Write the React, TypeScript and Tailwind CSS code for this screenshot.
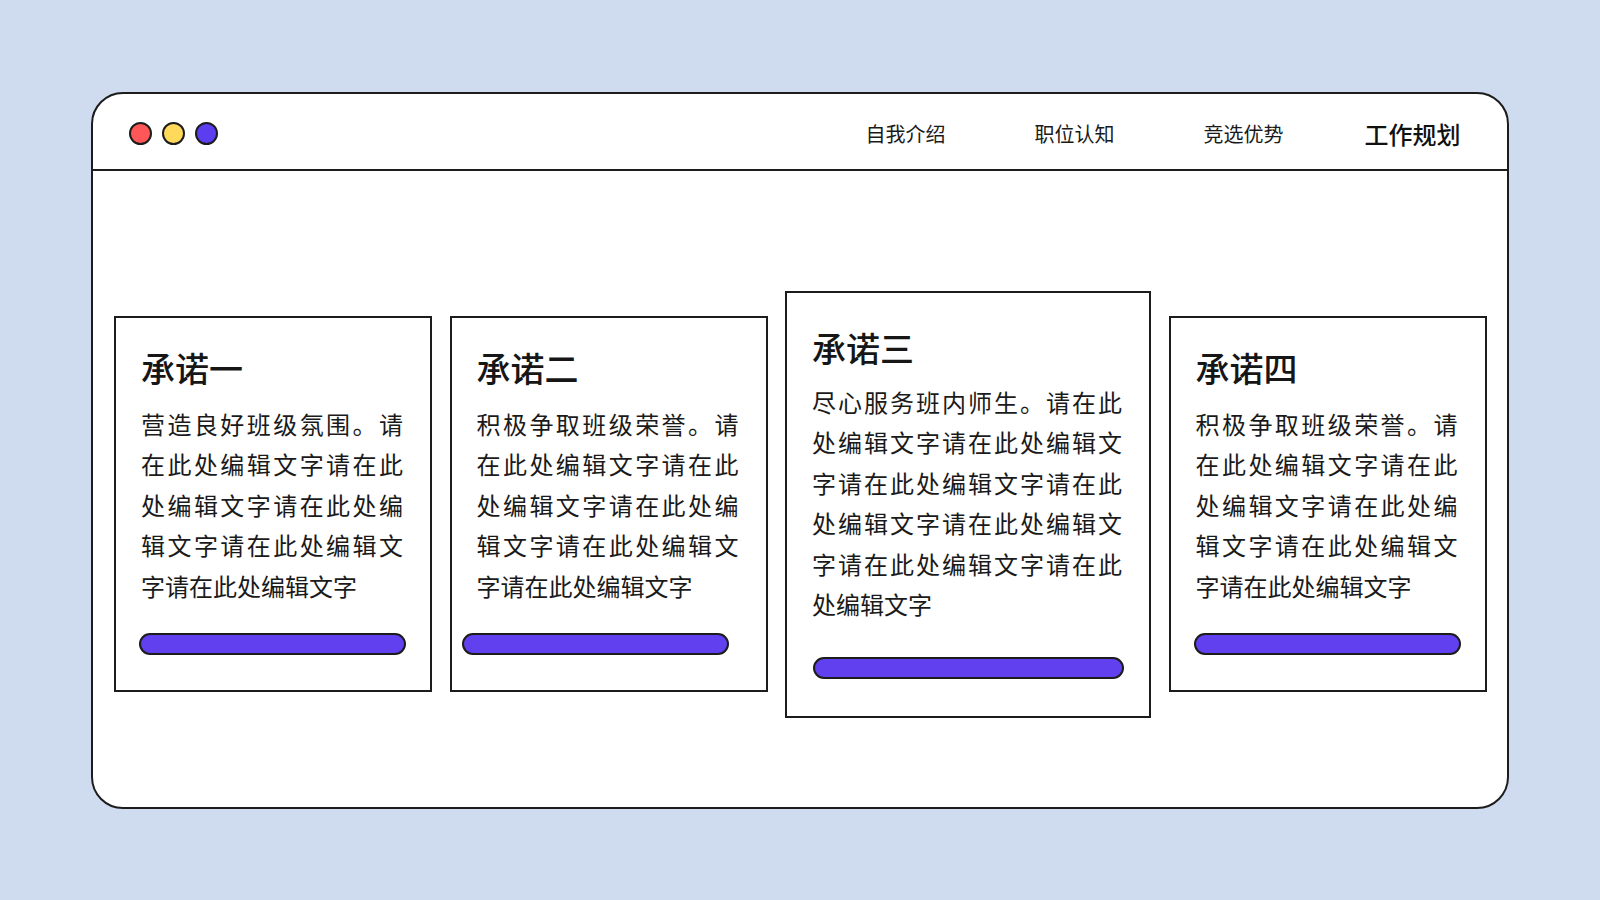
import React from "react";

const FONT = { fontFamily: '"Noto Sans CJK SC", "Noto Sans", sans-serif' };

type CardProps = {
  title: string;
  body: string;
  wide?: boolean;
  barShift?: boolean;
};

function Card({ title, body, wide, barShift }: CardProps) {
  if (wide) {
    return (
      <div className="w-[366px] shrink-0 border-2 border-[#1c1c1c] bg-white pl-[25px] pr-[27px] pt-[35px] pb-[37px]">
        <h2 className="h-[40px] text-[34px] leading-[40px] font-medium text-[#161616]">{title}</h2>
        <p className="mt-[14px] text-[24px] leading-[40.5px] text-justify text-[#1a1a1a]">{body}</p>
        <div className="mt-[32px] ml-[1px] h-[22px] w-[311px] rounded-full border-2 border-[#1c1c1c] bg-[#6140ef]" />
      </div>
    );
  }
  return (
    <div className="w-[318px] shrink-0 border-2 border-[#1c1c1c] bg-white pl-[25px] pr-[27px] pt-[30px] pb-[35px]">
      <h2 className="h-[40px] text-[34px] leading-[40px] font-medium text-[#161616]">{title}</h2>
      <p className="mt-[16px] text-[24px] leading-[40.5px] text-justify text-[#1a1a1a]">{body}</p>
      <div
        className={
          barShift
            ? "mt-[27px] -ml-[15px] h-[22px] w-[267px] rounded-full border-2 border-[#1c1c1c] bg-[#6140ef]"
            : "mt-[27px] -ml-[2px] h-[22px] w-[267px] rounded-full border-2 border-[#1c1c1c] bg-[#6140ef]"
        }
      />
    </div>
  );
}

const rep = (n: number) => Array(n).fill("请在此处编辑文字").join("");

export default function App() {
  return (
    <div style={FONT} className="flex h-[900px] w-full items-center justify-center bg-[#cfdcef]">
      <div className="flex h-[717px] w-[1418px] flex-col overflow-hidden rounded-[32px] border-2 border-[#1c1c1c] bg-white">
        <header className="flex h-[77px] shrink-0 items-center justify-between border-b-2 border-[#1c1c1c] pt-[5px] pl-[36px] pr-[10px]">
          <div className="flex items-center gap-[10px]">
            <span className="h-[23px] w-[23px] rounded-full border-2 border-[#1c1c1c] bg-[#ff5757]" />
            <span className="h-[23px] w-[23px] rounded-full border-2 border-[#1c1c1c] bg-[#ffd95a]" />
            <span className="h-[23px] w-[23px] rounded-full border-2 border-[#1c1c1c] bg-[#5c3ef0]" />
          </div>
          <nav className="flex items-center">
            <span className="w-[169px] text-center text-[20px] text-[#1a1a1a]">自我介绍</span>
            <span className="w-[169px] text-center text-[20px] text-[#1a1a1a]">职位认知</span>
            <span className="w-[169px] text-center text-[20px] text-[#1a1a1a]">竞选优势</span>
            <span className="w-[169px] text-center text-[24px] font-medium text-[#111]">工作规划</span>
          </nav>
        </header>
        <main className="flex flex-1 items-center gap-[17.5px] pl-[21px] pr-[18px] pt-[31px]">
          <Card title="承诺一" body={"营造良好班级氛围。" + rep(5)} />
          <Card title="承诺二" body={"积极争取班级荣誉。" + rep(5)} barShift />
          <Card title="承诺三" body={"尽心服务班内师生。" + rep(7)} wide />
          <Card title="承诺四" body={"积极争取班级荣誉。" + rep(5)} />
        </main>
      </div>
    </div>
  );
}
